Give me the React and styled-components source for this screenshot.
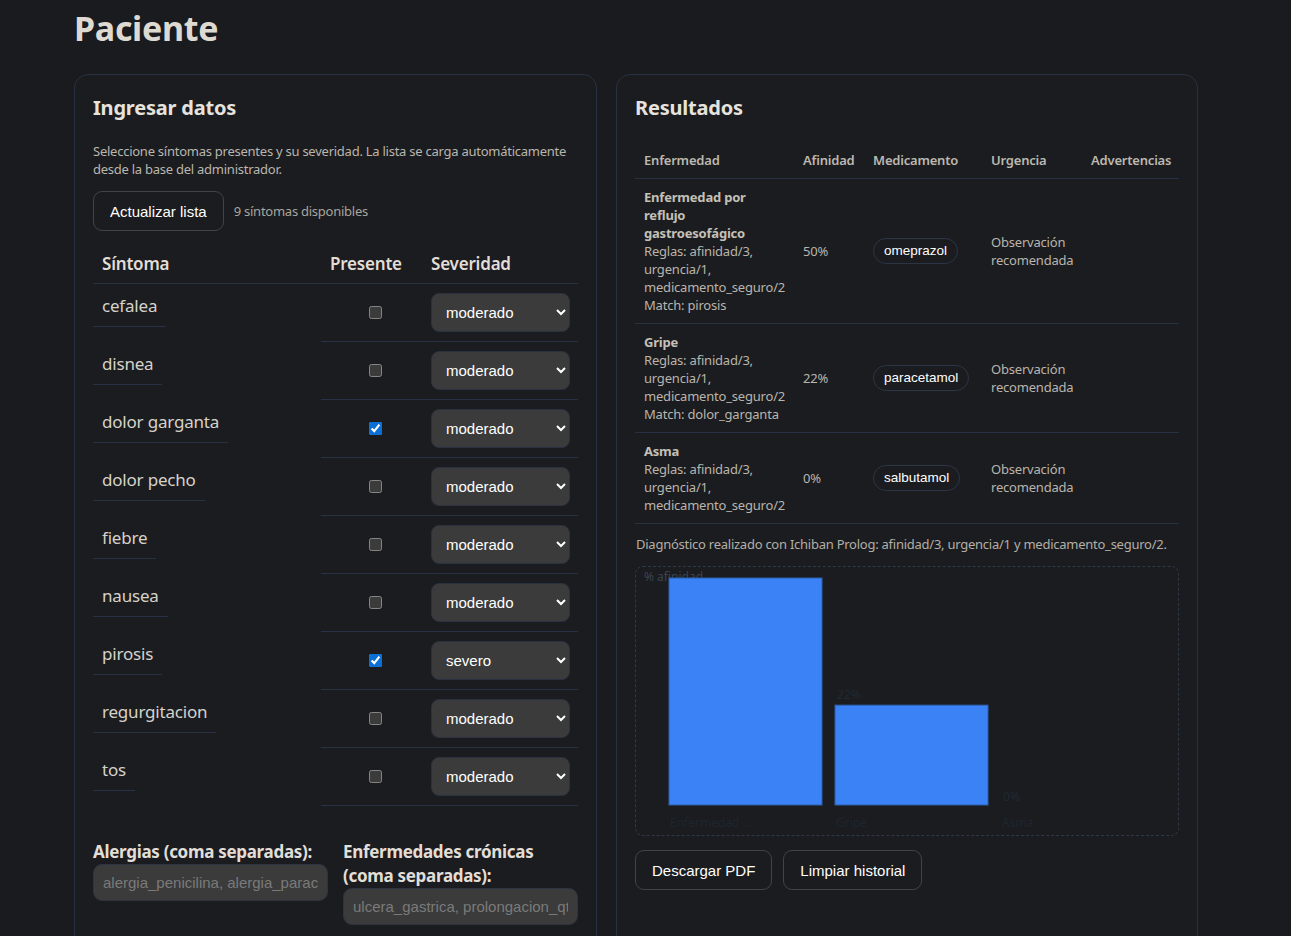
import React from 'react';
import styled, { createGlobalStyle } from 'styled-components';

const symptoms = [
  { name: 'cefalea', on: false, sev: 'moderado' },
  { name: 'disnea', on: false, sev: 'moderado' },
  { name: 'dolor garganta', on: true, sev: 'moderado' },
  { name: 'dolor pecho', on: false, sev: 'moderado' },
  { name: 'fiebre', on: false, sev: 'moderado' },
  { name: 'nausea', on: false, sev: 'moderado' },
  { name: 'pirosis', on: true, sev: 'severo' },
  { name: 'regurgitacion', on: false, sev: 'moderado' },
  { name: 'tos', on: false, sev: 'moderado' },
];

const results = [
  {
    name: 'Enfermedad por reflujo gastroesofágico',
    short: 'Enfermedad ...',
    match: 'pirosis',
    pct: 50,
    med: 'omeprazol',
  },
  { name: 'Gripe', short: 'Gripe', match: 'dolor_garganta', pct: 22, med: 'paracetamol' },
  { name: 'Asma', short: 'Asma', match: null, pct: 0, med: 'salbutamol' },
];

const App = () => {
  return (
    <>
      <GlobalStyle />
      <Page>
        <Title>Paciente</Title>
        <Columns>
          <Card>
            <CardTitle>Ingresar datos</CardTitle>
            <Hint>
              Seleccione síntomas presentes y su severidad. La lista se carga automáticamente
              desde la base del administrador.
            </Hint>
            <Toolbar>
              <Button>Actualizar lista</Button>
              <Muted>9 síntomas disponibles</Muted>
            </Toolbar>

            <SymptomGrid>
              <HeadCell>Síntoma</HeadCell>
              <HeadCell>Presente</HeadCell>
              <HeadCell>Severidad</HeadCell>
              {symptoms.map((s) => (
                <React.Fragment key={s.name}>
                  <NameCell>
                    <NameText>{s.name}</NameText>
                  </NameCell>
                  <CheckCell>
                    <Check type="checkbox" defaultChecked={s.on} />
                  </CheckCell>
                  <SelectCell>
                    <Select defaultValue={s.sev}>
                      <option value="leve">leve</option>
                      <option value="moderado">moderado</option>
                      <option value="severo">severo</option>
                    </Select>
                  </SelectCell>
                </React.Fragment>
              ))}
            </SymptomGrid>

            <Extras>
              <Field>
                <FieldLabel>Alergias (coma separadas):</FieldLabel>
                <TextInput placeholder="alergia_penicilina, alergia_paracetamol" />
              </Field>
              <Field>
                <FieldLabel>Enfermedades crónicas (coma separadas):</FieldLabel>
                <TextInput placeholder="ulcera_gastrica, prolongacion_qt" />
              </Field>
            </Extras>
          </Card>

          <Card>
            <CardTitle>Resultados</CardTitle>
            <ResultTable>
              <colgroup>
                <col style={{ width: 159 }} />
                <col style={{ width: 70 }} />
                <col style={{ width: 118 }} />
                <col style={{ width: 100 }} />
                <col />
              </colgroup>
              <thead>
                <tr>
                  <Th>Enfermedad</Th>
                  <Th>Afinidad</Th>
                  <Th>Medicamento</Th>
                  <Th>Urgencia</Th>
                  <Th>Advertencias</Th>
                </tr>
              </thead>
              <tbody>
                {results.map((r) => (
                  <tr key={r.name}>
                    <Td>
                      <Disease>{r.name}</Disease>
                      <div>Reglas: afinidad/3, urgencia/1, medicamento_seguro/2</div>
                      {r.match && <div>Match: {r.match}</div>}
                    </Td>
                    <Td>{r.pct}%</Td>
                    <Td>
                      <Pill>{r.med}</Pill>
                    </Td>
                    <Td>Observación recomendada</Td>
                    <Td />
                  </tr>
                ))}
              </tbody>
            </ResultTable>
            <Caption>
              Diagnóstico realizado con Ichiban Prolog: afinidad/3, urgencia/1 y medicamento_seguro/2.
            </Caption>

            <ChartBox>
              <svg width="543" height="268" viewBox="0 0 543 268">
                <text x="8" y="14" fill="#3a4350" fontSize="12" fontFamily="Noto Sans, sans-serif">
                  % afinidad
                </text>
                {results.map((r, i) => {
                  const h = r.pct * 4.54;
                  const x = 33 + i * 166;
                  const y = 238 - h;
                  return (
                    <g key={r.name}>
                      {h > 0 && (
                        <rect x={x} y={y} width="153" height={h} fill="#3b82f6" stroke="#2e5fa8" strokeWidth="1" />
                      )}
                      {y > 30 && (
                        <text
                          x={x + 2}
                          y={h > 0 ? y - 6 : 234}
                          fill="#202934"
                          fontSize="12"
                          fontFamily="Noto Sans, sans-serif"
                        >
                          {r.pct}%
                        </text>
                      )}
                      <text x={x + 1} y="260" fill="#1d2530" fontSize="12" fontFamily="Noto Sans, sans-serif">
                        {r.short}
                      </text>
                    </g>
                  );
                })}
              </svg>
            </ChartBox>

            <Actions>
              <Button>Descargar PDF</Button>
              <Button>Limpiar historial</Button>
            </Actions>
          </Card>
        </Columns>
      </Page>
    </>
  );
};

export default App;

const GlobalStyle = createGlobalStyle`
  html, body {
    margin: 0;
    padding: 0;
    background: #1a1b1e;
    color-scheme: dark;
  }
  body {
    font-family: "Noto Sans", "Open Sans", sans-serif;
    color: #c9c5bd;
  }
`;

const Page = styled.div`
  width: 1124px;
  margin-left: 74px;
  padding-bottom: 40px;
`;

const Title = styled.h1`
  margin: 0;
  padding: 6px 0 24px 0;
  font-size: 34px;
  line-height: 44px;
  font-weight: 700;
  letter-spacing: -0.3px;
  color: #dedad2;
`;

const Columns = styled.div`
  display: grid;
  grid-template-columns: 523px 582px;
  gap: 19px;
  align-items: start;
`;

const Card = styled.section`
  background: #1b1c1f;
  border: 1px solid #263243;
  border-radius: 14px;
  padding: 19px 18px 24px;
  min-height: 900px;
`;

const CardTitle = styled.h2`
  margin: 0 0 20px 0;
  font-size: 20px;
  line-height: 28px;
  font-weight: 700;
  letter-spacing: -0.2px;
  color: #e6e3de;
`;

const Hint = styled.p`
  margin: 1px 0 13px;
  font-size: 13px;
  line-height: 18px;
  letter-spacing: -0.25px;
  color: #bab6ae;
`;

const Toolbar = styled.div`
  display: flex;
  align-items: center;
  gap: 10px;
  margin-bottom: 13px;
`;

const Button = styled.button`
  height: 40px;
  padding: 0 16px;
  border: 1px solid #434343;
  border-radius: 9px;
  background: #1b1c1f;
  color: #ffffff;
  font-family: "Liberation Sans", Arial, sans-serif;
  font-size: 15px;
`;

const Muted = styled.span`
  font-size: 13px;
  letter-spacing: -0.25px;
  color: #a9a59d;
`;

const SymptomGrid = styled.div`
  display: grid;
  grid-template-columns: 228px 101px 156px;
`;

const HeadCell = styled.div`
  padding: 6px 9px;
  height: 40px;
  box-sizing: border-box;
  font-size: 17px;
  line-height: 28px;
  font-weight: 600;
  letter-spacing: -0.2px;
  color: #e2ded7;
  border-bottom: 1px solid #263243;
`;

const NameCell = styled.div`
  height: 58px;
`;

const NameText = styled.div`
  display: inline-block;
  padding: 9px 9px 8px;
  font-size: 17px;
  line-height: 25px;
  letter-spacing: -0.2px;
  color: #d6d2ca;
  border-bottom: 1px solid #263243;
`;

const CheckCell = styled.div`
  height: 58px;
  box-sizing: border-box;
  display: flex;
  align-items: center;
  justify-content: center;
  padding-left: 7px;
  border-bottom: 1px solid #263243;
`;

const Check = styled.input`
  width: 13px;
  height: 13px;
  margin: 0;
  accent-color: #0b6fd8;
`;

const SelectCell = styled.div`
  height: 58px;
  box-sizing: border-box;
  display: flex;
  align-items: center;
  padding-left: 9px;
  border-bottom: 1px solid #263243;
`;

const Select = styled.select`
  width: 139px;
  height: 39px;
  padding: 0 8px 0 10px;
  border: 1px solid #2a3140;
  border-radius: 8px;
  background: #3b3b3b;
  color: #ffffff;
  font-family: "Liberation Sans", Arial, sans-serif;
  font-size: 15px;
`;

const Extras = styled.div`
  display: grid;
  grid-template-columns: 1fr 1fr;
  gap: 15px;
  margin-top: 34px;
  align-items: start;
`;

const Field = styled.label`
  display: flex;
  flex-direction: column;
`;

const FieldLabel = styled.span`
  font-size: 17px;
  line-height: 24px;
  font-weight: 700;
  letter-spacing: -0.3px;
  color: #e2ded7;
`;

const TextInput = styled.input`
  height: 37px;
  box-sizing: border-box;
  padding: 0 9px;
  border: 1px solid #2d3340;
  border-radius: 9px;
  background: #3b3b3b;
  color: #ffffff;
  font-family: "Liberation Sans", Arial, sans-serif;
  font-size: 15px;
  &::placeholder {
    color: #7a7a7a;
  }
`;

const ResultTable = styled.table`
  width: 100%;
  table-layout: fixed;
  border-collapse: collapse;
  font-size: 13px;
  line-height: 18px;
  letter-spacing: -0.2px;
`;

const Th = styled.th`
  text-align: left;
  padding: 9px 9px;
  font-weight: 600;
  color: #bcb8b0;
  border-bottom: 1px solid #263243;
  white-space: nowrap;
`;

const Td = styled.td`
  padding: 9px 9px;
  vertical-align: middle;
  color: #b9b5ad;
  border-bottom: 1px solid #263243;
`;

const Disease = styled.div`
  font-weight: 700;
  color: #c4c0b8;
`;

const Pill = styled.span`
  display: inline-block;
  padding: 3px 10px;
  border: 1px solid #2b3546;
  border-radius: 13px;
  color: #ffffff;
  font-family: "Liberation Sans", Arial, sans-serif;
  font-size: 13.5px;
  letter-spacing: 0;
  line-height: 18px;
`;

const Caption = styled.p`
  margin: 11px 0 13px 1px;
  font-size: 13px;
  line-height: 18px;
  letter-spacing: -0.25px;
  white-space: nowrap;
  color: #b3afa7;
`;

const ChartBox = styled.div`
  height: 268px;
  border: 1px dashed #2d3849;
  border-radius: 8px;
`;

const Actions = styled.div`
  display: flex;
  gap: 11px;
  margin-top: 14px;
`;
